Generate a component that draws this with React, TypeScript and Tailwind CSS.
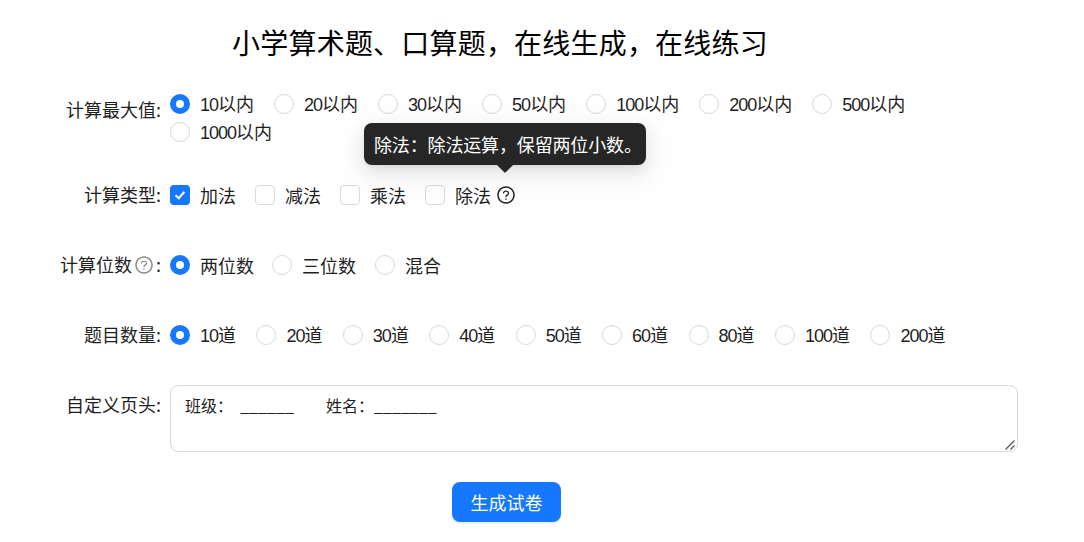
import { AiOutlineQuestionCircle } from "react-icons/ai";

const font = "font-['Noto_Sans_CJK_SC','Noto_Sans',sans-serif]";

function Num({ d, rest }: { d: string; rest: string }) {
  return (
    <>
      <span className="tracking-[-1px] font-['Liberation_Sans',sans-serif]">{d}</span>
      {rest}
    </>
  );
}

function Radio({ on, children, mr = "mr-[20px]" }: { on?: boolean; children: React.ReactNode; mr?: string }) {
  return (
    <label className={`flex items-center h-7 ${mr}`}>
      <span
        className={
          on
            ? "w-5 h-5 rounded-full bg-[#1677ff] flex items-center justify-center mr-[10px]"
            : "w-5 h-5 rounded-full bg-white border border-[#d9d9d9] mr-[10px]"
        }
      >
        {on && <span className="w-2 h-2 rounded-full bg-white" />}
      </span>
      <span className="whitespace-nowrap">{children}</span>
    </label>
  );
}

function Check({ on, children }: { on?: boolean; children: React.ReactNode }) {
  return (
    <label className="flex items-center h-7 mr-[19px]">
      <span
        className={
          on
            ? "w-5 h-5 rounded-[4px] bg-[#1677ff] flex items-center justify-center mr-[10px]"
            : "w-5 h-5 rounded-[4px] bg-white border border-[#d9d9d9] mr-[10px]"
        }
      >
        {on && (
          <svg width="14" height="14" viewBox="0 0 14 14" fill="none">
            <path d="M2.5 7.2 L5.8 10.2 L11.3 3.9" stroke="#fff" strokeWidth="2.2" />
          </svg>
        )}
      </span>
      <span className="whitespace-nowrap">{children}</span>
    </label>
  );
}

function Row({ label, children, className = "" }: { label: React.ReactNode; children: React.ReactNode; className?: string }) {
  return (
    <div className={`flex ${className}`}>
      <div className="w-[161px] h-10 pb-[1px] flex items-center justify-end whitespace-nowrap shrink-0">{label}</div>
      <div className="ml-[9px] flex-1 min-w-0">{children}</div>
    </div>
  );
}

export default function App() {
  return (
    <div className={`w-[1084px] h-[542px] bg-white overflow-hidden text-[18px] text-[#1f1f1f] ${font}`}>
      <div className="w-[1000px] h-[90px] pb-[6px] flex items-center justify-center text-[28px] tracking-[0.2px] leading-none text-black">
        小学算术题、口算题，在线生成，在线练习
      </div>

      <div className="w-[1018px]">
        <Row label="计算最大值:" className="h-[55px] mb-[30px]">
          <div className="flex flex-wrap w-[848px]">
            <Radio on><Num d="10" rest="以内" /></Radio>
            <Radio><Num d="20" rest="以内" /></Radio>
            <Radio><Num d="30" rest="以内" /></Radio>
            <Radio><Num d="50" rest="以内" /></Radio>
            <Radio><Num d="100" rest="以内" /></Radio>
            <Radio><Num d="200" rest="以内" /></Radio>
            <Radio><Num d="500" rest="以内" /></Radio>
            <Radio><Num d="1000" rest="以内" /></Radio>
          </div>
        </Row>

        <Row label="计算类型:" className="h-10 mb-[30px]">
          <div className="flex items-center h-10">
            <Check on>加法</Check>
            <Check>减法</Check>
            <Check>乘法</Check>
            <label className="flex items-center h-7">
              <span className="w-5 h-5 rounded-[4px] bg-white border border-[#d9d9d9] mr-[10px]" />
              <span className="whitespace-nowrap">除法</span>
              <span className="relative ml-[5px] flex items-center">
                <AiOutlineQuestionCircle size={20} className="text-[#1f1f1f]" />
                <span className="absolute left-[-132px] bottom-[40px] w-[282px] h-[42px] bg-[#262626] text-white rounded-lg flex items-center pl-[10px] tracking-[-0.15px] whitespace-nowrap shadow-[0_6px_16px_rgba(0,0,0,0.08),0_3px_6px_-4px_rgba(0,0,0,0.12),0_9px_28px_8px_rgba(0,0,0,0.05)]">
                  除法：除法运算，保留两位小数。
                  <svg className="absolute left-1/2 -translate-x-1/2 top-full" width="16" height="8" viewBox="0 0 16 8">
                    <path d="M0 0 H16 L9 7 Q8 8 7 7 Z" fill="#262626" />
                  </svg>
                </span>
              </span>
            </label>
          </div>
        </Row>

        <Row
          label={
            <>
              计算位数
              <AiOutlineQuestionCircle size={20} className="text-[#8c8c8c] mx-[2px]" />:
            </>
          }
          className="h-10 mb-[30px]"
        >
          <div className="flex items-center h-10">
            <Radio on mr="mr-[18px]">两位数</Radio>
            <Radio mr="mr-[19px]">三位数</Radio>
            <Radio>混合</Radio>
          </div>
        </Row>

        <Row label="题目数量:" className="h-10 mb-[30px]">
          <div className="flex items-center h-10">
            <Radio on mr="mr-[20.4px]"><Num d="10" rest="道" /></Radio>
            <Radio mr="mr-[20.4px]"><Num d="20" rest="道" /></Radio>
            <Radio mr="mr-[20.4px]"><Num d="30" rest="道" /></Radio>
            <Radio mr="mr-[20.4px]"><Num d="40" rest="道" /></Radio>
            <Radio mr="mr-[20.4px]"><Num d="50" rest="道" /></Radio>
            <Radio mr="mr-[20.4px]"><Num d="60" rest="道" /></Radio>
            <Radio mr="mr-[20.4px]"><Num d="80" rest="道" /></Radio>
            <Radio mr="mr-[20.4px]"><Num d="100" rest="道" /></Radio>
            <Radio mr="mr-[20.4px]"><Num d="200" rest="道" /></Radio>
          </div>
        </Row>

        <Row label="自定义页头:" className="h-[67px] mb-[30px]">
          <div className="relative w-[848px] h-[67px]">
            <textarea
              readOnly
              value={"班级：  ______         姓名：_______"}
              className={`block w-full h-full resize-none border border-[#d9d9d9] rounded-lg px-[14px] py-[7px] text-[16px] leading-[24px] text-[#1f1f1f] outline-none ${font}`}
            />
            <svg className="absolute right-[2px] bottom-[1px] pointer-events-none" width="12" height="12" viewBox="0 0 12 12" fill="none">
              <path d="M1.5 10.5 L10.5 1.5 M6.5 10.5 L10.5 6.5" stroke="#555" strokeWidth="1.2" />
            </svg>
          </div>
        </Row>

        <div className="flex justify-center">
          <button className="ml-[-5px] w-[109px] h-10 rounded-lg bg-[#1677ff] text-white text-[18px] shadow-[0_2px_0_rgba(5,145,255,0.1)]">
            生成试卷
          </button>
        </div>
      </div>
    </div>
  );
}
